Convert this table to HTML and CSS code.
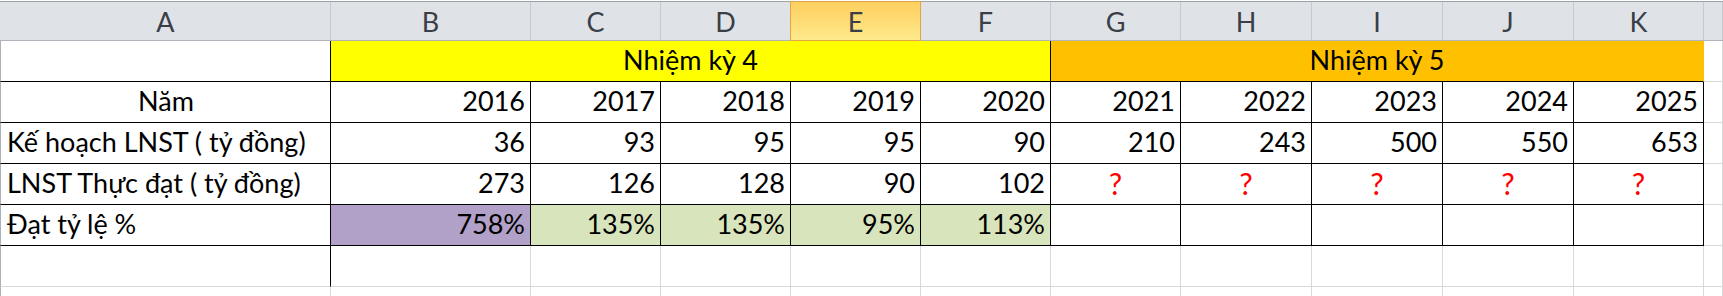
FILE: index.html
```html
<!DOCTYPE html>
<html lang="vi">
<head>
<meta charset="utf-8">
<title>Kế hoạch LNST</title>
<link rel="stylesheet" href="styles.css">
</head>
<body>
<div class="sheet">
  <div class="row head">
    <div class="hc first">A</div>
    <div class="hc">B</div>
    <div class="hc">C</div>
    <div class="hc">D</div>
    <div class="hc sel">E</div>
    <div class="hc">F</div>
    <div class="hc">G</div>
    <div class="hc">H</div>
    <div class="hc">I</div>
    <div class="hc">J</div>
    <div class="hc">K</div>
    <div class="hc"></div>
  </div>

  <div class="row">
    <div class="c a bk"></div>
    <div class="c term t4 bk span5">Nhiệm kỳ 4</div>
    <div class="c term t5 span5">Nhiệm kỳ 5</div>
    <div class="c"></div>
  </div>

  <div class="row">
    <div class="c a bk center">Năm</div>
    <div class="c bk num">2016</div>
    <div class="c bk num">2017</div>
    <div class="c bk num">2018</div>
    <div class="c bk num">2019</div>
    <div class="c bk num">2020</div>
    <div class="c bk num">2021</div>
    <div class="c bk num">2022</div>
    <div class="c bk num">2023</div>
    <div class="c bk num">2024</div>
    <div class="c bk num">2025</div>
    <div class="c"></div>
  </div>

  <div class="row">
    <div class="c a bk">Kế hoạch LNST ( tỷ đồng)</div>
    <div class="c bk num">36</div>
    <div class="c bk num">93</div>
    <div class="c bk num">95</div>
    <div class="c bk num">95</div>
    <div class="c bk num">90</div>
    <div class="c bk num">210</div>
    <div class="c bk num">243</div>
    <div class="c bk num">500</div>
    <div class="c bk num">550</div>
    <div class="c bk num">653</div>
    <div class="c"></div>
  </div>

  <div class="row">
    <div class="c a bk">LNST Thực đạt ( tỷ đồng)</div>
    <div class="c bk num">273</div>
    <div class="c bk num">126</div>
    <div class="c bk num">128</div>
    <div class="c bk num">90</div>
    <div class="c bk num">102</div>
    <div class="c bk center q">?</div>
    <div class="c bk center q">?</div>
    <div class="c bk center q">?</div>
    <div class="c bk center q">?</div>
    <div class="c bk center q">?</div>
    <div class="c"></div>
  </div>

  <div class="row">
    <div class="c a bk">Đạt tỷ lệ %</div>
    <div class="c bk num over">758%</div>
    <div class="c bk num hit">135%</div>
    <div class="c bk num hit">135%</div>
    <div class="c bk num hit">95%</div>
    <div class="c bk num hit">113%</div>
    <div class="c bk"></div>
    <div class="c bk"></div>
    <div class="c bk"></div>
    <div class="c bk"></div>
    <div class="c bk"></div>
    <div class="c"></div>
  </div>

  <div class="row">
    <div class="c a edge"></div>
    <div class="c"></div>
    <div class="c"></div>
    <div class="c"></div>
    <div class="c"></div>
    <div class="c"></div>
    <div class="c"></div>
    <div class="c"></div>
    <div class="c"></div>
    <div class="c"></div>
    <div class="c"></div>
    <div class="c"></div>
  </div>

  <div class="row">
    <div class="c a"></div>
    <div class="c"></div>
    <div class="c"></div>
    <div class="c"></div>
    <div class="c"></div>
    <div class="c"></div>
    <div class="c"></div>
    <div class="c"></div>
    <div class="c"></div>
    <div class="c"></div>
    <div class="c"></div>
    <div class="c"></div>
  </div>
</div>
</body>
</html>
```

FILE: styles.css
```css
html, body {
  margin: 0;
  padding: 0;
  background: #ffffff;
}

body {
  font-family: Lato, "Noto Sans", sans-serif;
  font-size: 27px;
  color: #000000;
  overflow: hidden;
}

.sheet {
  padding-top: 1px;
  height: 296px;
  box-sizing: border-box;
  overflow: hidden;
}

/* every row shares the same column track widths */
.row {
  display: grid;
  grid-template-columns: 331px 200px 130px 130px 130px 130px 130px 131px 131px 131px 130px 1fr;
  height: 41px;
}

/* column letters */
.head {
  height: 40px;
  background: #dfe3e8;
  border-top: 1px solid #9da1a8;
  border-bottom: 1px solid #b1b5bb;
  box-sizing: border-box;
}

.hc {
  box-sizing: border-box;
  border-right: 1px solid #c6cad0;
  display: flex;
  align-items: flex-end;
  justify-content: center;
  color: #3a3f47;
  line-height: 34px;
  padding-bottom: 1px;
}

.hc.first {
  border-left: 1px solid #dfe3e8;
}

.hc.sel {
  background: linear-gradient(#fecf5e, #ffea8c);
  border: 1px solid #e0a548;
  margin-top: -1px;
  margin-bottom: -1px;
  margin-left: -1px;
}

/* worksheet cells */
.c {
  box-sizing: border-box;
  border-right: 1px solid #d9d9d9;
  border-bottom: 1px solid #d9d9d9;
  display: flex;
  align-items: flex-end;
  padding: 0 5px 4px 5px;
  line-height: 34px;
  white-space: nowrap;
  overflow: hidden;
}

.c.a {
  border-left: 1px solid #acb1b8;
  padding-left: 6px;
}

.c.bk {
  border-right-color: #000000;
  border-bottom-color: #000000;
}

.c.edge {
  border-right-color: #000000;
}

.num {
  justify-content: flex-end;
}

.center {
  justify-content: center;
}

.span5 {
  grid-column: span 5;
  justify-content: center;
}

.t4 {
  background: #ffff00;
}

.t5 {
  background: #ffc000;
  border-right-color: #ffc000;
  border-bottom-color: #000000;
}

.q {
  color: #ff0000;
  font-size: 30px;
}

.over {
  background: #b1a0c7;
}

.hit {
  background: #d8e4bc;
}
```
